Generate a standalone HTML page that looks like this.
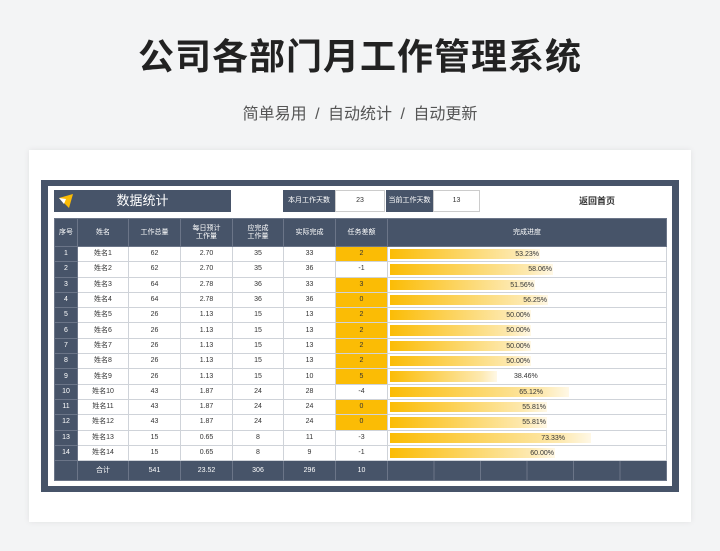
<!DOCTYPE html>
<html><head><meta charset="utf-8"><style>
*{margin:0;padding:0;box-sizing:border-box}
body{width:720px;height:551px;background:#f3f4f5;font-family:"Liberation Sans","Noto Sans CJK SC",sans-serif;position:relative;overflow:hidden}
.t{position:absolute;top:28px;left:0;width:720px;text-align:center;font-size:36px;font-weight:bold;color:#222;letter-spacing:1px}
.s{position:absolute;top:100px;left:0;width:720px;text-align:center;font-size:16px;color:#555;word-spacing:4px}
.card{position:absolute;left:29px;top:150px;width:662px;height:372px;background:#fff;box-shadow:0 0 6px rgba(0,0,0,.08)}
.frame{position:absolute;left:41px;top:180px;width:638px;height:312px;background:#475469}
.inner{position:absolute;left:48px;top:186px;width:624px;height:300px;background:#fff}
.dk{position:absolute;background:#475469;color:#fff;font-size:7px;text-align:center}
.wb{position:absolute;background:#fff;border:1px solid #ccc;font-size:7px;text-align:center;color:#333}
table{position:absolute;left:54px;top:218px;border-collapse:collapse;table-layout:fixed;width:612px}
td{height:15.3px;font-size:7px;line-height:8px;text-align:center;color:#333;border:1px solid #cfd3d9;padding:0}
tr.h td{height:28px;background:#475469;color:#fff;border-color:#6b7588}
td.n{background:#475469;color:#fff;border-color:#6b7588}
tr.f td{height:20px;background:#475469;color:#fff;border-color:#6b7588}
td.y{background:#fbbc05}
td.p{position:relative;text-align:left}
.bar{position:absolute;left:2px;top:2px;bottom:2px;background:linear-gradient(90deg,#fbbc05,#fde9b0 85%,#fff8e6);text-align:right;font-size:7px;line-height:11px;color:#333;padding-right:1px}
</style></head><body>
<div class="t">公司各部门月工作管理系统</div>
<div class="s">简单易用 / 自动统计 / 自动更新</div>
<div class="card"></div>
<div class="frame"></div>
<div class="inner"></div>
<div class="dk" style="left:54px;top:190px;width:177px;height:22px;font-size:13px;line-height:22px">数据统计</div>
<svg style="position:absolute;left:58px;top:193px" width="16" height="16" viewBox="0 0 16 16"><polygon points="1,5 15,1 11,15" fill="#fbbc05"/><polygon points="1,5 8,6 6,11" fill="#fff"/></svg>
<div class="dk" style="left:283px;top:190px;width:52px;height:22px;line-height:22px">本月工作天数</div>
<div class="wb" style="left:335px;top:190px;width:50px;height:22px;line-height:20px">23</div>
<div class="dk" style="left:386px;top:190px;width:47px;height:22px;line-height:22px">当前工作天数</div>
<div class="wb" style="left:433px;top:190px;width:47px;height:22px;line-height:20px">13</div>
<div style="position:absolute;left:560px;top:194px;width:74px;text-align:center;font-size:9px;font-weight:bold;color:#333">返回首页</div>
<table>
<colgroup><col style="width:23px"><col style="width:51px"><col style="width:52px"><col style="width:52px"><col style="width:51px"><col style="width:52px"><col style="width:52px"><col style="width:279px"></colgroup>
<tr class="h"><td>序号</td><td>姓名</td><td>工作总量</td><td>每日预计<br>工作量</td><td>应完成<br>工作量</td><td>实际完成</td><td>任务差额</td><td>完成进度</td></tr>
<tr><td class="n">1</td><td>姓名1</td><td>62</td><td>2.70</td><td>35</td><td>33</td><td class="y">2</td><td class="p"><div class="bar" style="width:150px">53.23%</div></td></tr>
<tr><td class="n">2</td><td>姓名2</td><td>62</td><td>2.70</td><td>35</td><td>36</td><td>-1</td><td class="p"><div class="bar" style="width:163px">58.06%</div></td></tr>
<tr><td class="n">3</td><td>姓名3</td><td>64</td><td>2.78</td><td>36</td><td>33</td><td class="y">3</td><td class="p"><div class="bar" style="width:145px">51.56%</div></td></tr>
<tr><td class="n">4</td><td>姓名4</td><td>64</td><td>2.78</td><td>36</td><td>36</td><td class="y">0</td><td class="p"><div class="bar" style="width:158px">56.25%</div></td></tr>
<tr><td class="n">5</td><td>姓名5</td><td>26</td><td>1.13</td><td>15</td><td>13</td><td class="y">2</td><td class="p"><div class="bar" style="width:141px">50.00%</div></td></tr>
<tr><td class="n">6</td><td>姓名6</td><td>26</td><td>1.13</td><td>15</td><td>13</td><td class="y">2</td><td class="p"><div class="bar" style="width:141px">50.00%</div></td></tr>
<tr><td class="n">7</td><td>姓名7</td><td>26</td><td>1.13</td><td>15</td><td>13</td><td class="y">2</td><td class="p"><div class="bar" style="width:141px">50.00%</div></td></tr>
<tr><td class="n">8</td><td>姓名8</td><td>26</td><td>1.13</td><td>15</td><td>13</td><td class="y">2</td><td class="p"><div class="bar" style="width:141px">50.00%</div></td></tr>
<tr><td class="n">9</td><td>姓名9</td><td>26</td><td>1.13</td><td>15</td><td>10</td><td class="y">5</td><td class="p"><div class="bar" style="width:107px"></div><span style="position:absolute;left:126px;top:3px;font-size:7px;line-height:9px">38.46%</span></td></tr>
<tr><td class="n">10</td><td>姓名10</td><td>43</td><td>1.87</td><td>24</td><td>28</td><td>-4</td><td class="p"><div class="bar" style="width:179px;padding-right:26px">65.12%</div></td></tr>
<tr><td class="n">11</td><td>姓名11</td><td>43</td><td>1.87</td><td>24</td><td>24</td><td class="y">0</td><td class="p"><div class="bar" style="width:157px">55.81%</div></td></tr>
<tr><td class="n">12</td><td>姓名12</td><td>43</td><td>1.87</td><td>24</td><td>24</td><td class="y">0</td><td class="p"><div class="bar" style="width:157px">55.81%</div></td></tr>
<tr><td class="n">13</td><td>姓名13</td><td>15</td><td>0.65</td><td>8</td><td>11</td><td>-3</td><td class="p"><div class="bar" style="width:201px;padding-right:26px">73.33%</div></td></tr>
<tr><td class="n">14</td><td>姓名14</td><td>15</td><td>0.65</td><td>8</td><td>9</td><td>-1</td><td class="p"><div class="bar" style="width:165px">60.00%</div></td></tr>
<tr class="f"><td></td><td>合计</td><td>541</td><td>23.52</td><td>306</td><td>296</td><td>10</td><td style="padding:0;position:relative"><div style="position:absolute;inset:0;background:repeating-linear-gradient(90deg,#475469 0 45.5px,#6b7588 45.5px 46.5px)"></div></td></tr>
</table>
</body></html>
